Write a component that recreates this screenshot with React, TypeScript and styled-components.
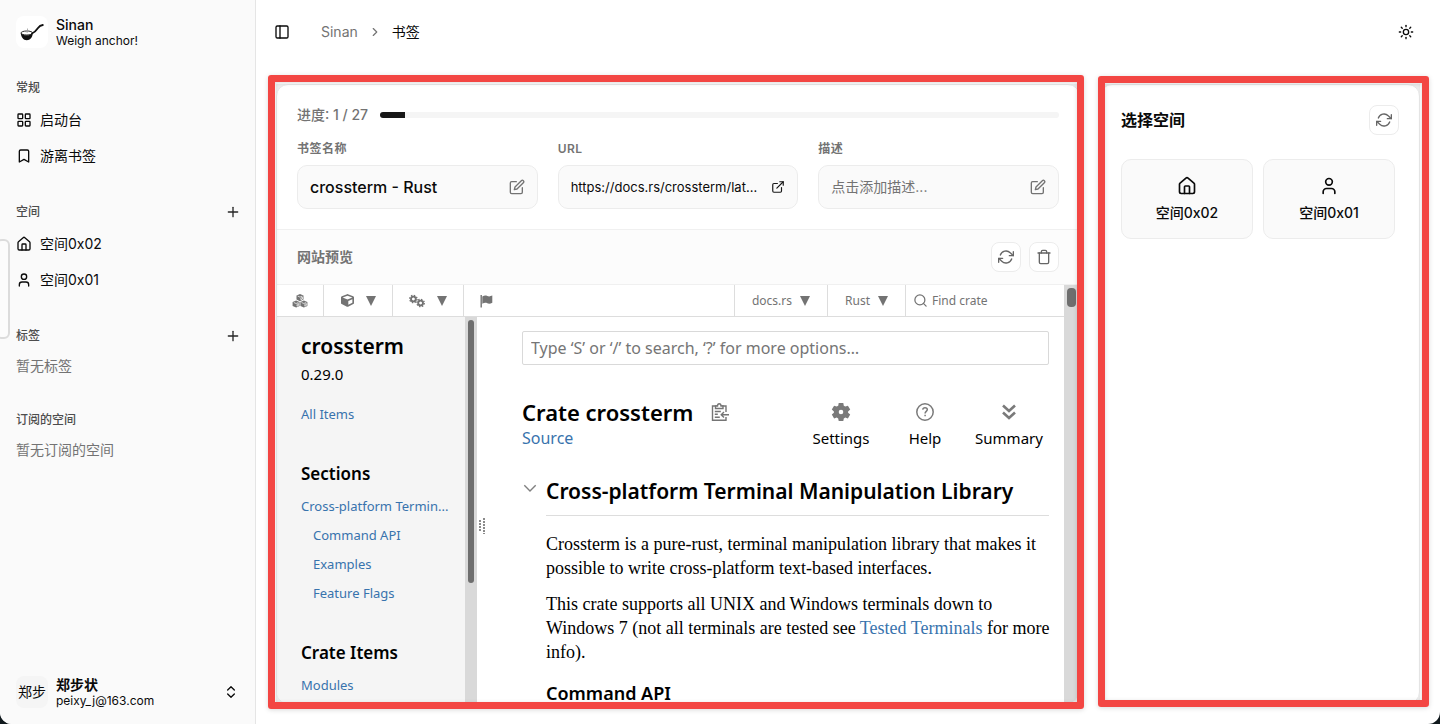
import React from "react";
import styled, { createGlobalStyle } from "styled-components";
import {
  Bookmark,
  ChevronRight,
  ChevronsUpDown,
  House,
  LayoutGrid,
  PanelLeft,
  Plus,
  Search,
  Sun,
  User,
} from "lucide-react";
import { FiEdit, FiExternalLink, FiRefreshCw, FiTrash } from "react-icons/fi";
import { FaCube } from "react-icons/fa";

const uiFont = `Inter, "Noto Sans CJK SC", sans-serif`;
const docsFont = `"Noto Sans", "Open Sans", sans-serif`;
const serifFont = `"Liberation Serif", serif`;
const docsLink = "#3873ad";

const GlobalStyle = createGlobalStyle`
  *, *::before, *::after { box-sizing: border-box; }
  body { margin: 0; background: #10191d; font-family: ${uiFont}; font-size: 14px; line-height: 20px; color: #0a0a0a; }
  button, input { font: inherit; color: inherit; margin: 0; }
  button { background: none; border: 0; padding: 0; cursor: pointer; }
  h1, h2, h3, p, ul { margin: 0; padding: 0; }
  ul { list-style: none; }
  a { color: inherit; text-decoration: none; }
  svg { flex: none; display: block; }
`;

const Shell = styled.div`
  display: flex;
  height: 100vh;
  min-height: 600px;
  background: #fff;
  border-radius: 0 0 12px 12px;
  overflow: hidden;
  position: relative;
`;

const Sidebar = styled.aside`
  flex: none;
  width: 256px;
  background: #fafafa;
  border-right: 1px solid #e5e5e5;
  display: flex;
  flex-direction: column;
`;

const EdgeHandle = styled.div`
  position: absolute;
  left: -4px;
  top: 239px;
  width: 14px;
  height: 100px;
  background: #fcfcfc;
  border: 2px solid #dcdcdc;
  border-radius: 6px;
`;

const Identity = styled.div`
  display: flex;
  align-items: center;
  gap: 8px;
  padding: 8px 16px;
  height: 64px;
`;

const Avatar = styled.span<{ $bg: string }>`
  width: 32px;
  height: 32px;
  border-radius: 8px;
  background: ${(p) => p.$bg};
  display: grid;
  place-items: center;
  white-space: nowrap;
  flex: none;
`;

const IdentityText = styled.div<{ $strong: number }>`
  flex: 1;
  display: flex;
  flex-direction: column;
  line-height: 16px;
  font-size: 12px;

  strong {
    font-size: 14px;
    line-height: 17px;
    font-weight: ${(p) => p.$strong};
  }
`;

const IdentityButton = styled.button`
  display: grid;
  place-items: center;
  width: 16px;
  height: 16px;
`;

const Groups = styled.nav`
  flex: 1;
  padding: 8px 14px 8px 16px;
  display: flex;
  flex-direction: column;
  gap: 24px;
`;

const GroupHeader = styled.div`
  display: flex;
  align-items: center;
  justify-content: space-between;
  height: 32px;

  h2 {
    font-size: 12px;
    line-height: 16px;
    font-weight: 500;
    color: #4d4d4d;
  }

  button {
    color: #262626;
  }
`;

const NavList = styled.ul`
  display: flex;
  flex-direction: column;
  gap: 4px;
`;

const NavLink = styled.a`
  display: flex;
  align-items: center;
  gap: 8px;
  height: 32px;
`;

const EmptyNote = styled.p`
  color: #737373;
  line-height: 28px;
`;

const Page = styled.div`
  flex: 1;
  min-width: 0;
  display: flex;
  flex-direction: column;
`;

const TopBar = styled.header`
  flex: none;
  height: 64px;
  padding: 0 26px 0 18px;
  display: flex;
  align-items: center;
  justify-content: space-between;
`;

const Crumbs = styled.nav`
  display: flex;
  align-items: center;
  color: #737373;
  gap: 10px;

  button {
    margin-right: 21px;
    color: #0a0a0a;
  }

  span {
    color: #0a0a0a;
  }
`;

const Workspace = styled.main`
  flex: 1;
  min-height: 0;
  display: grid;
  grid-template-columns: minmax(0, 1fr) 320px;
  gap: 20px;
  padding: 20px;
`;

const Highlight = styled.section<{ $inset: string }>`
  position: relative;
  min-height: 0;
  display: flex;
  background: #eee;

  &::after {
    content: "";
    position: absolute;
    inset: ${(p) => p.$inset};
    border: 7px solid #f34643;
    border-radius: 3px;
    box-shadow: 0 1px 5px rgba(0, 0, 0, 0.15), inset 0 1px 4px rgba(0, 0, 0, 0.15);
    pointer-events: none;
  }
`;

const Card = styled.div`
  flex: 1;
  min-width: 0;
  display: flex;
  flex-direction: column;
  background: #fff;
  border: 1px solid #e8e8e8;
  border-radius: 12px;
  overflow: hidden;
`;

const Details = styled.div`
  padding: 20px;
  display: flex;
  flex-direction: column;
  gap: 15px;
`;

const ProgressRow = styled.div`
  display: flex;
  align-items: center;
  gap: 12px;
  height: 20px;
  font-weight: 500;
  color: #737373;
`;

const Track = styled.div`
  flex: 1;
  height: 6px;
  border-radius: 3px;
  background: #f5f5f5;
  overflow: hidden;

  div {
    height: 100%;
    background: #171717;
  }
`;

const Fields = styled.div`
  display: grid;
  grid-template-columns: repeat(3, minmax(0, 1fr));
  gap: 20px;
`;

const Field = styled.div`
  display: flex;
  flex-direction: column;
  gap: 8px;
`;

const FieldLabel = styled.span`
  font-size: 12px;
  line-height: 17px;
  font-weight: 600;
  letter-spacing: 0.5px;
  color: #737373;
`;

const fieldSizes = { title: 16, muted: 14, link: 13 };

const FieldBox = styled.button<{ $tone: "title" | "muted" | "link" }>`
  display: flex;
  align-items: center;
  justify-content: space-between;
  gap: 6px;
  height: 44px;
  padding: 0 12px;
  background: #fafafa;
  border: 1px solid #ececec;
  border-radius: 10px;
  text-align: left;
  white-space: nowrap;
  font-size: ${(p) => fieldSizes[p.$tone]}px;
  font-weight: ${(p) => (p.$tone === "title" ? 500 : 400)};
  color: ${(p) => (p.$tone === "muted" ? "#737373" : "#0a0a0a")};

  svg {
    color: ${(p) => (p.$tone === "link" ? "#171717" : "#737373")};
  }
`;

const PreviewBar = styled.div`
  display: flex;
  align-items: center;
  gap: 8px;
  padding: 12px 20px;
  background: #fcfcfc;
  border-top: 1px solid #f0f0f0;

  h2 {
    flex: 1;
    font-size: 14px;
    font-weight: 600;
    color: #737373;
  }
`;

const IconButton = styled.button`
  width: 30px;
  height: 30px;
  display: grid;
  place-items: center;
  background: #fff;
  border: 1px solid #ececec;
  border-radius: 8px;
  color: #666;
`;

const Docs = styled.div`
  flex: 1;
  min-height: 0;
  display: flex;
  font-family: ${docsFont};
  color: #000;
  border-top: 1px solid #f0f0f0;
`;

const DocsPage = styled.div`
  flex: 1;
  min-width: 0;
  display: flex;
  flex-direction: column;
`;

const DocsBar = styled.div`
  flex: none;
  display: flex;
  height: 32px;
  border-bottom: 1px solid #ddd;
  font-size: 12px;
  line-height: 16px;
  color: #737373;
`;

const DocsMenu = styled.button<{ $width: number; $edge?: "left" | "right" }>`
  width: ${(p) => p.$width}px;
  display: flex;
  align-items: center;
  justify-content: center;
  gap: ${(p) => (p.$edge === "left" ? 8 : 12)}px;
  border: 0 solid #ddd;
  border-left-width: ${(p) => (p.$edge === "left" ? 1 : 0)}px;
  border-right-width: ${(p) => (p.$edge === "right" ? 1 : 0)}px;
`;

const Caret = styled.span`
  border: 5px solid transparent;
  border-top: 10px solid #737373;
  border-bottom: 0;
`;

const DocsSpacer = styled.div`
  flex: 1;
`;

const CrateSearch = styled.label`
  width: 159px;
  display: flex;
  align-items: center;
  gap: 4px;
  padding-left: 7px;
  border-left: 1px solid #ddd;

  input {
    width: 100px;
    border: 0;
    padding: 0;
    background: none;
    outline: 0;
  }

  input::placeholder {
    color: #737373;
    opacity: 1;
  }
`;

const DocsBody = styled.div`
  flex: 1;
  min-height: 0;
  display: flex;
  overflow: hidden;
`;

const DocsNav = styled.nav`
  flex: none;
  width: 188px;
  background: #f5f5f5;
  padding: 15px 8px 0 24px;
  overflow: hidden;

  h2 {
    font-size: 21px;
    line-height: 28px;
    font-weight: 600;
  }

  h3 {
    margin: 33px 0 6px;
    font-size: 17px;
    line-height: 24px;
    font-weight: 600;
    white-space: nowrap;
  }

  p {
    margin: 2px 0 14px;
    font-size: 15px;
    line-height: 24px;
  }
`;

const DocsNavLink = styled.a<{ $nested?: boolean }>`
  display: block;
  padding-left: ${(p) => (p.$nested ? 12 : 0)}px;
  font-size: 13px;
  line-height: 29px;
  color: ${docsLink};
  white-space: nowrap;
`;

const ScrollTrack = styled.div<{ $width: number }>`
  flex: none;
  width: ${(p) => p.$width}px;
  padding: 3px;
  background: #d9d9d9;
`;

const ScrollThumb = styled.div<{ $height: number }>`
  height: ${(p) => p.$height}px;
  border-radius: 4px;
  background: #6e6e6e;
`;

const Resizer = styled.div`
  flex: none;
  width: 10px;
  padding-top: 201px;
  display: flex;
  justify-content: center;
`;

const Article = styled.article`
  flex: 1;
  min-width: 0;
  padding: 14px 15px 0 35px;
`;

const DocsSearch = styled.input`
  display: block;
  width: 100%;
  height: 34px;
  padding: 0 8px 1px;
  border: 1px solid #d9d9d9;
  border-radius: 2px;
  font-size: 16px;

  &::placeholder {
    color: #757575;
    opacity: 1;
  }
`;

const Heading = styled.div`
  margin-top: 33px;
  display: flex;
  justify-content: space-between;
  line-height: 24px;
  font-size: 16px;

  h1 {
    display: flex;
    align-items: center;
    gap: 18px;
    font-size: 22px;
    line-height: 28px;
    font-weight: 600;
    white-space: nowrap;
  }
`;

const DocsTools = styled.div`
  display: flex;
  gap: 16px;
  padding-right: 6px;
`;

const DocsTool = styled.button`
  width: 68px;
  display: flex;
  flex-direction: column;
  align-items: center;
  line-height: 24px;
  font-size: 15px;

  svg {
    height: 28px;
    color: #7a7a7a;
  }
`;

const TextLink = styled.a`
  color: ${docsLink};
`;

const SectionTitle = styled.div`
  margin-top: 27px;
  display: flex;
  gap: 8px;

  button {
    color: #808080;
    align-self: flex-start;
    padding-top: 3px;
  }

  h2 {
    flex: 1;
    padding-bottom: 10px;
    border-bottom: 1px solid #ddd;
    font-size: 21px;
    line-height: 28px;
    font-weight: 600;
    white-space: nowrap;
  }
`;

const Prose = styled.div`
  padding: 16px 0 0 24px;
  display: flex;
  flex-direction: column;
  gap: 12px;

  p {
    font-family: ${serifFont};
    font-size: 18px;
    line-height: 24px;
    white-space: nowrap;
  }

  h3 {
    margin-top: 4px;
    font-size: 18px;
    line-height: 26px;
    font-weight: 600;
  }
`;

const SpacePicker = styled.div`
  padding: 20px;
`;

const SpaceHeader = styled.div`
  display: flex;
  align-items: center;
  justify-content: space-between;

  h2 {
    font-size: 16px;
    font-weight: 600;
  }
`;

const SpaceGrid = styled.div`
  display: grid;
  grid-template-columns: 1fr 1fr;
  gap: 10px;
  margin-top: 24px;
  padding-right: 4px;
`;

const SpaceTile = styled.button`
  height: 80px;
  display: flex;
  flex-direction: column;
  align-items: center;
  justify-content: center;
  gap: 7px;
  background: #fafafa;
  border: 1px solid #ececec;
  border-radius: 10px;
  font-weight: 500;
`;

const LadleLogo = () => (
  <svg width="24" height="18" viewBox="0 0 24 18" fill="none" aria-hidden="true">
    <ellipse cx="6.800" cy="10" rx="5.800" ry="2" fill="#fff" stroke="#111" strokeWidth="0.9" />
    <path d="M.8 10c.2 4 2.400 7.200 6 7.200 3.500 0 5.700-2.900 6-7.200-1.300 1.700-3.300 2.300-6 2.300S2 11.700.8 10z" fill="#111" />
    <path d="M12 10.500c2.500-.8 4.200-2.800 6-5.400 1.200-1.800 2.600-2.900 4.800-3.100" stroke="#111" strokeWidth="1.800" strokeLinecap="round" />
    <path d="M7.500 5.500v4M5.800 9l3.400-.8" stroke="#999" strokeWidth="0.8" />
  </svg>
);

const CubesIcon = () => (
  <svg width="16" height="14" viewBox="0 0 16 14" fill="currentColor" aria-hidden="true">
    {[[8, 3.6], [4.1, 10], [11.9, 10]].map(([x, y]) => (
      <g key={x} transform={`translate(${x} ${y})`}>
        <path d="M0-3.500 3.500-2v4L0 3.600-3.500 2v-4z" />
        <path d="M-2.300-1.500 0-.5l2.300-1M.9 2.200v-1.800l1.600-.8v1.800z" fill="none" stroke="#fff" strokeWidth="0.7" />
      </g>
    ))}
  </svg>
);

const SmallGear = ({ x, y }: { x: number; y: number }) => (
  <g transform={`translate(${x} ${y})`} fill="none" stroke="currentColor">
    <circle r="2.400" strokeWidth="1.900" />
    <circle r="3.700" strokeWidth="1.300" strokeDasharray="1.450 1.450" />
  </g>
);

const GearsIcon = () => (
  <svg width="16" height="14" viewBox="0 0 16 14" aria-hidden="true">
    <SmallGear x={4.4} y={5} />
    <SmallGear x={11.6} y={9} />
  </svg>
);

const FlagIcon = () => (
  <svg width="13" height="14" viewBox="0 0 13 14" aria-hidden="true">
    <path d="M1.200 1v12.500" stroke="currentColor" strokeWidth="1.400" />
    <path d="M2.300 2.500c2-1.200 3.500-1.200 5 -.5s3 .5 5-.4v7.200c-2 1-3.500 1.200-5 .5s-3-.7-5 .5z" fill="currentColor" />
  </svg>
);

const ToggleIcon = () => (
  <svg width="16" height="16" viewBox="0 0 16 16" fill="none" stroke="currentColor" strokeWidth="1.400" aria-hidden="true">
    <path d="M2.300 5.300 8 11l5.700-5.700" />
  </svg>
);

const ClipboardIcon = () => (
  <svg width="19" height="18" viewBox="0 0 19 18" fill="none" stroke="#757575" strokeWidth="1.400" aria-hidden="true">
    <path d="M15 9V3H1.500v14.300H15V14" />
    <path d="M4.500 5.500V3h2C6.500 1.600 7.200.8 8.200.8s1.800.8 1.800 2.200h2v2.500z" fill="#fff" />
    <path d="M3.800 8.500h6M3.800 11.300h3M3.800 14.200h5M18 11.800h-7.500M13 9l-2.800 2.800L13 14.600" />
  </svg>
);

const GearIcon = () => (
  <svg width="20" height="20" viewBox="0 0 20 20" fill="currentColor" aria-hidden="true">
    <path
      fillRule="evenodd"
      d="M7.700 1h4.600l.5 2.700 1.500.9 2.600-.9 2.300 3.900-2.100 1.800v1.400l2.100 1.700-2.300 4-2.600-1-1.500.9-.5 2.600H7.700l-.5-2.600-1.500-.9-2.600 1-2.300-4 2.100-1.700V9.400L.8 7.600l2.300-3.900 2.600.9 1.500-.9zM10 7.700a2.300 2.300 0 1 0 0 4.600 2.300 2.300 0 0 0 0-4.600z"
    />
  </svg>
);

const HelpIcon = () => (
  <svg width="20" height="20" viewBox="0 0 20 20" fill="none" stroke="currentColor" strokeWidth="1.500" aria-hidden="true">
    <circle cx="10" cy="10" r="8.200" />
    <path d="M7.700 7.700c.2-1.300 1.100-2 2.300-2 1.400 0 2.300.8 2.300 1.900 0 1.700-2.200 1.800-2.200 3.800M10.100 12.800v1.500" />
  </svg>
);

const CollapseIcon = () => (
  <svg width="16" height="18" viewBox="0 0 16 18" fill="none" stroke="currentColor" strokeWidth="2.600" aria-hidden="true">
    <path d="M2 2.500 8 8l6-5.500M2 9.500 8 15l6-5.500" />
  </svg>
);

const GripIcon = () => (
  <svg width="6" height="16" viewBox="0 0 6 16" fill="none" stroke="#8a8a8a" strokeWidth="2" strokeDasharray="2 1" aria-hidden="true">
    <path d="M1 2v12M5 0v16" />
  </svg>
);

const spaces = [
  { name: "空间0x02", Icon: House },
  { name: "空间0x01", Icon: User },
];

const general = [
  { name: "启动台", Icon: LayoutGrid },
  { name: "游离书签", Icon: Bookmark },
];

const NavItems = ({ items }: { items: typeof spaces }) => (
  <NavList>
    {items.map(({ name, Icon }) => (
      <li key={name}>
        <NavLink href="#">
          <Icon size={16} />
          {name}
        </NavLink>
      </li>
    ))}
  </NavList>
);

const AppSidebar = () => (
  <Sidebar>
    <Identity>
      <Avatar $bg="#fff">
        <LadleLogo />
      </Avatar>
      <IdentityText $strong={500}>
        <strong>Sinan</strong>
        Weigh anchor!
      </IdentityText>
    </Identity>
    <Groups>
      <div>
        <GroupHeader>
          <h2>常规</h2>
        </GroupHeader>
        <NavItems items={general} />
      </div>
      <div>
        <GroupHeader>
          <h2>空间</h2>
          <button aria-label="新建空间">
            <Plus size={16} />
          </button>
        </GroupHeader>
        <NavItems items={spaces} />
      </div>
      <div>
        <GroupHeader>
          <h2>标签</h2>
          <button aria-label="新建标签">
            <Plus size={16} />
          </button>
        </GroupHeader>
        <EmptyNote>暂无标签</EmptyNote>
      </div>
      <div>
        <GroupHeader>
          <h2>订阅的空间</h2>
        </GroupHeader>
        <EmptyNote>暂无订阅的空间</EmptyNote>
      </div>
    </Groups>
    <Identity>
      <Avatar $bg="#f5f5f5">郑步</Avatar>
      <IdentityText $strong={600}>
        <strong>郑步状</strong>
        peixy_j@163.com
      </IdentityText>
      <IdentityButton aria-label="账户菜单">
        <ChevronsUpDown size={16} />
      </IdentityButton>
    </Identity>
  </Sidebar>
);

const DocsPreview = () => (
  <Docs>
    <DocsPage>
      <DocsBar>
        <DocsMenu $width={47} $edge="right" aria-label="docs.rs">
          <CubesIcon />
        </DocsMenu>
        <DocsMenu $width={69} $edge="right" aria-label="crate">
          <FaCube size={13} />
          <Caret />
        </DocsMenu>
        <DocsMenu $width={71} $edge="right" aria-label="platform">
          <GearsIcon />
          <Caret />
        </DocsMenu>
        <DocsMenu $width={44} aria-label="feature flags">
          <FlagIcon />
        </DocsMenu>
        <DocsSpacer />
        <DocsMenu $width={93} $edge="left">
          docs.rs
          <Caret />
        </DocsMenu>
        <DocsMenu $width={78} $edge="left">
          Rust
          <Caret />
        </DocsMenu>
        <CrateSearch>
          <Search size={15} />
          <input placeholder="Find crate" aria-label="Find crate" />
        </CrateSearch>
      </DocsBar>
      <DocsBody>
        <DocsNav>
          <h2>crossterm</h2>
          <p>0.29.0</p>
          <DocsNavLink href="#">All Items</DocsNavLink>
          <h3>Sections</h3>
          <DocsNavLink href="#">Cross-platform Termin...</DocsNavLink>
          <DocsNavLink href="#" $nested>Command API</DocsNavLink>
          <DocsNavLink href="#" $nested>Examples</DocsNavLink>
          <DocsNavLink href="#" $nested>Feature Flags</DocsNavLink>
          <h3>Crate Items</h3>
          <DocsNavLink href="#">Modules</DocsNavLink>
        </DocsNav>
        <ScrollTrack $width={12}>
          <ScrollThumb $height={263} />
        </ScrollTrack>
        <Resizer>
          <GripIcon />
        </Resizer>
        <Article>
          <DocsSearch
            aria-label="Search documentation"
            placeholder="Type ‘S’ or ‘/’ to search, ‘?’ for more options…"
          />
          <Heading>
            <div>
              <h1>
                Crate crossterm
                <button aria-label="Copy item path">
                  <ClipboardIcon />
                </button>
              </h1>
              <TextLink href="#">Source</TextLink>
            </div>
            <DocsTools>
              <DocsTool>
                <GearIcon />
                Settings
              </DocsTool>
              <DocsTool>
                <HelpIcon />
                Help
              </DocsTool>
              <DocsTool>
                <CollapseIcon />
                Summary
              </DocsTool>
            </DocsTools>
          </Heading>
          <SectionTitle>
            <button aria-label="Toggle section">
              <ToggleIcon />
            </button>
            <h2>Cross-platform Terminal Manipulation Library</h2>
          </SectionTitle>
          <Prose>
            <p>
              Crossterm is a pure-rust, terminal manipulation library that makes it
              <br />
              possible to write cross-platform text-based interfaces.
            </p>
            <p>
              This crate supports all UNIX and Windows terminals down to
              <br />
              Windows 7 (not all terminals are tested see <TextLink href="#">Tested Terminals</TextLink> for more
              <br />
              info).
            </p>
            <h3>Command API</h3>
          </Prose>
        </Article>
      </DocsBody>
    </DocsPage>
    <ScrollTrack $width={15}>
      <ScrollThumb $height={19} />
    </ScrollTrack>
  </Docs>
);

const current = 1;
const total = 27;

export default function App() {
  return (
    <>
      <GlobalStyle />
      <Shell>
        <AppSidebar />
        <EdgeHandle />
        <Page>
          <TopBar>
            <Crumbs aria-label="路径">
              <button aria-label="切换侧边栏">
                <PanelLeft size={16} />
              </button>
              <a href="#">Sinan</a>
              <ChevronRight size={14} />
              <span>书签</span>
            </Crumbs>
            <button aria-label="切换主题">
              <Sun size={16} />
            </button>
          </TopBar>
          <Workspace>
            <Highlight $inset="-9px -4px -5px -8px">
              <Card>
                <Details>
                  <ProgressRow>
                    <span>
                      进度: {current} / {total}
                    </span>
                    <Track role="progressbar" aria-valuenow={current} aria-valuemax={total} aria-label="进度">
                      <div style={{ width: `${(current / total) * 100}%` }} />
                    </Track>
                  </ProgressRow>
                  <Fields>
                    <Field>
                      <FieldLabel id="field-name">书签名称</FieldLabel>
                      <FieldBox $tone="title" aria-describedby="field-name">
                        crossterm - Rust
                        <FiEdit size={16} />
                      </FieldBox>
                    </Field>
                    <Field>
                      <FieldLabel id="field-url">URL</FieldLabel>
                      <FieldBox as="a" href="#" $tone="link" aria-describedby="field-url">
                        https://docs.rs/crossterm/lat...
                        <FiExternalLink size={14} />
                      </FieldBox>
                    </Field>
                    <Field>
                      <FieldLabel id="field-description">描述</FieldLabel>
                      <FieldBox $tone="muted" aria-describedby="field-description">
                        点击添加描述...
                        <FiEdit size={16} />
                      </FieldBox>
                    </Field>
                  </Fields>
                </Details>
                <PreviewBar>
                  <h2>网站预览</h2>
                  <IconButton aria-label="刷新预览">
                    <FiRefreshCw size={16} />
                  </IconButton>
                  <IconButton aria-label="删除书签">
                    <FiTrash size={16} />
                  </IconButton>
                </PreviewBar>
                <DocsPreview />
              </Card>
            </Highlight>
            <Highlight $inset="-8px -9px -3px -2px">
              <Card>
                <SpacePicker>
                  <SpaceHeader>
                    <h2>选择空间</h2>
                    <IconButton aria-label="刷新空间">
                      <FiRefreshCw size={16} />
                    </IconButton>
                  </SpaceHeader>
                  <SpaceGrid>
                    {spaces.map(({ name, Icon }) => (
                      <SpaceTile key={name}>
                        <Icon size={20} />
                        {name}
                      </SpaceTile>
                    ))}
                  </SpaceGrid>
                </SpacePicker>
              </Card>
            </Highlight>
          </Workspace>
        </Page>
      </Shell>
    </>
  );
}
